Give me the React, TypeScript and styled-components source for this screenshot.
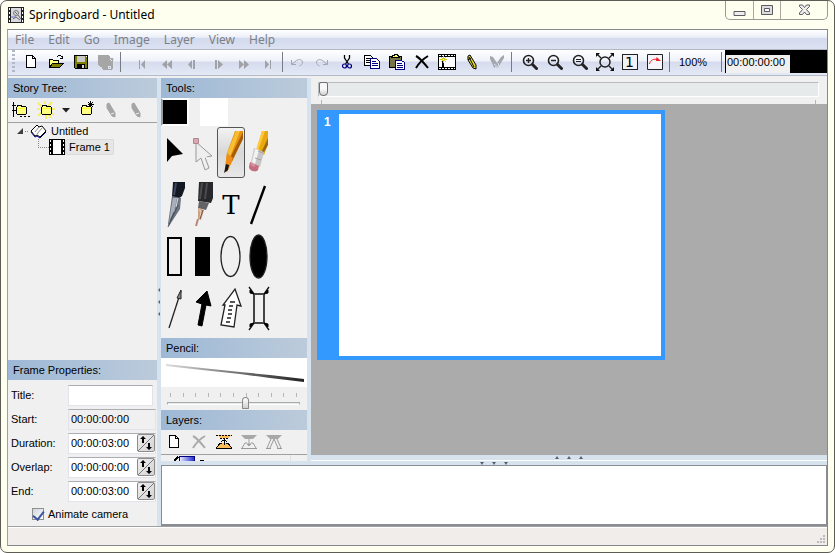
import React from "react";
import styled, { createGlobalStyle, css } from "styled-components";

const GlobalStyle = createGlobalStyle`
  * { box-sizing: border-box; }
  body { margin: 0; font: 11px/14px "Liberation Sans", Arial, sans-serif; color: #000; background: #fff; }
  button, input { font: inherit; color: inherit; margin: 0; }
  svg { display: block; flex: none; }
`;

/* ---------- window frame ---------- */

const Window = styled.div`
  height: 100vh;
  display: flex;
  flex-direction: column;
  padding: 0 6px 6px;
  background: #fffff0;
  border: 1px solid #5c5c54;
  border-radius: 7px;
  overflow: hidden;
`;

const TitleBar = styled.header`
  flex: none;
  height: 28px;
  display: flex;
  align-items: center;
  gap: 5px;
  padding-left: 1px;
`;

const Title = styled.h1`
  flex: 1;
  margin: 0;
  font: 400 12px/20px "Noto Sans", "Open Sans", sans-serif;
`;

const Caption = styled.div`
  align-self: flex-start;
  display: flex;
  border: 1px solid #9a9a92;
  border-top: 0;
  border-radius: 0 0 5px 5px;
`;

const CaptionButton = styled.button<{ $wide?: boolean }>`
  display: grid;
  place-items: center;
  width: ${(p) => (p.$wide ? 47 : 27)}px;
  height: 18px;
  padding: 0;
  border: 0;
  background: none;
  & + & { border-left: 1px solid #a8a8a0; }
`;

const Client = styled.div`
  flex: 1;
  min-height: 0;
  display: flex;
  flex-direction: column;
  border: 1px solid #85888c;
  border-left-color: #a0a0a0;
  background: #f0f0f0;
`;

const MenuBar = styled.nav`
  flex: none;
  display: flex;
  height: 19px;
  background: linear-gradient(#fff 0, #eceff8 38%, #d3daed 45%, #dce2f2 100%);
`;

const MenuItem = styled.button`
  border: 0;
  padding: 0 7px;
  background: none;
  font: 12px/18px "Noto Sans", "Open Sans", sans-serif;
  color: #7c8087;
`;

/* ---------- main tool bar ---------- */

const Toolbar = styled.div`
  flex: none;
  display: flex;
  align-items: center;
  height: 27px;
  padding-bottom: 2px;
  border-top: 1px solid #b4b8c2;
  border-bottom: 1px solid #b4bac8;
  background: linear-gradient(#fff 0, #f0f2fa 42%, #d6dcee 50%, #e4e9f6 100%);
`;

const Grip = styled.span`
  width: 3px;
  height: 23px;
  margin: 0 3px 0 4px;
  background: repeating-linear-gradient(#b3b8c8 0 2px, transparent 2px 4px);
`;

const ToolGroup = styled.div`
  flex: none;
  display: flex;
`;

const Separator = styled.span<{ $after: number }>`
  flex: none;
  width: 1px;
  height: 20px;
  margin: 0 ${(p) => p.$after}px 0 2px;
  background: #767b86;
`;

const IconButton = styled.button<{ $narrow?: boolean }>`
  display: grid;
  place-items: center;
  width: ${(p) => (p.$narrow ? 15 : 25)}px;
  height: 24px;
  padding: 0;
  border: 0;
  background: none;
`;

const ZoomValue = styled.output`
  width: 47px;
  padding-left: 7px;
`;

const ClockWell = styled.div`
  flex: 1;
  align-self: stretch;
  padding: 5px 0 0 1px;
  background: #000;
`;

const ClockField = styled.input`
  display: block;
  width: 64px;
  height: 18px;
  padding: 0 0 4px 1px;
  border: 0;
  background: #f0f0f0;
`;

/* ---------- panels ---------- */

const Workspace = styled.div`
  flex: 1;
  min-height: 0;
  display: grid;
  grid-template-columns: 149px 4px minmax(0, 1fr);
  padding-top: 2px;
`;

const Column = styled.section`
  display: flex;
  flex-direction: column;
  min-height: 0;
  min-width: 0;
`;

const Heading = styled.h2`
  flex: none;
  height: 20px;
  margin: 0;
  padding: 0 5px;
  font: 11px/21px "Liberation Sans", Arial, sans-serif;
  background: linear-gradient(90deg, #9db8d6, #bccbdb);
`;

const PanelBar = styled.div`
  flex: none;
  display: flex;
  height: 25px;
  border-bottom: 1px solid #a0a0a0;
`;

const Splitter = styled.div`
  display: flex;
  align-items: center;
  justify-content: center;
  background: #d6e2ee;
`;

const Tree = styled.ul`
  flex: 1;
  margin: 0;
  padding: 0 0 0 1px;
  list-style: none;
`;

const TreeRow = styled.li<{ $nested?: boolean }>`
  display: flex;
  align-items: center;
  height: 16px;
  padding-left: ${(p) => (p.$nested ? 28 : 0)}px;
`;

const TreeLabel = styled.span<{ $selected?: boolean }>`
  padding: 0 4px;
  line-height: 16px;
  ${(p) =>
    p.$selected &&
    css`
      border-radius: 2px;
      background: #e6e6e6;
      box-shadow: inset 0 0 0 1px #dadada;
    `}
`;

const Form = styled.form`
  flex: none;
  height: 146px;
  padding: 3px 0 0 3px;
`;

const Field = styled.label`
  display: grid;
  grid-template-columns: 57px minmax(0, 1fr);
  align-items: center;
  height: 24px;
`;

const Entry = styled.span<{ $static?: boolean; $short?: boolean }>`
  display: flex;
  align-items: center;
  height: 21px;
  margin-right: ${(p) => (p.$short ? 4 : 1)}px;
  border: 1px solid #e2e3ea;
  border-top-color: #abadb3;
  background: ${(p) => (p.$static ? "#f0f0f0" : "#fff")};
`;

const EntryInput = styled.input`
  flex: 1;
  width: 0;
  min-width: 0;
  padding: 0 2px;
  border: 0;
  background: none;
`;

const SpinButton = styled.button`
  flex: none;
  display: grid;
  place-items: center;
  width: 18px;
  height: 18px;
  padding: 0;
  border: 1px solid #8c8c8c;
  border-radius: 2px;
  background: linear-gradient(135deg, #eee, #d4d4d4);
`;

const CheckLabel = styled.label`
  display: flex;
  align-items: center;
  gap: 4px;
  height: 22px;
  padding-left: 21px;
`;

const Checkbox = styled.input`
  appearance: none;
  display: flex;
  justify-content: center;
  width: 12px;
  height: 12px;
  border: 1px solid #8e8f8f;
  background: linear-gradient(135deg, #cfd6df, #fff);
  &:checked::after {
    content: "";
    width: 5px;
    height: 9px;
    border: solid #3e56a0;
    border-width: 0 2px 2px 0;
    transform: rotate(38deg);
  }
`;

/* ---------- drawing area ---------- */

const RightSide = styled.div`
  display: flex;
  flex-direction: column;
  min-width: 0;
  min-height: 0;
`;

const Upper = styled.div`
  flex: 1;
  min-height: 0;
  display: grid;
  grid-template-columns: 146px 4px minmax(0, 1fr);
`;

const Swatches = styled.div`
  flex: none;
  display: flex;
  gap: 11px;
  height: 29px;
`;

const Swatch = styled.button<{ $color: string; $current?: boolean }>`
  width: 28px;
  height: 28px;
  border: 0;
  border-style: solid;
  border-width: ${(p) => (p.$current ? "2px" : "0")};
  border-color: #fff #fff #fff #9a9a9a;
  background: ${(p) => p.$color};
`;

const ToolGrid = styled.div`
  flex: 1;
  display: grid;
  grid-template-columns: repeat(4, 28px);
  grid-auto-rows: 52px;
`;

const ToolButton = styled.button<{ $active?: boolean }>`
  display: grid;
  place-items: center;
  width: 28px;
  height: 51px;
  padding: 0;
  border: 1px solid transparent;
  background: none;
  ${(p) =>
    p.$active &&
    css`
      border-color: #555;
      border-radius: 3px;
      background: linear-gradient(#f2f2f2, #d8d8d8 50%, #e8e8e8);
    `}
`;

const StrokePreview = styled.div`
  flex: none;
  height: 29px;
  background: #fff;
`;

const SizeControl = styled.div`
  flex: none;
  height: 23px;
  padding: 6px 7px 0 6px;
`;

const Ticks = styled.div`
  display: flex;
  justify-content: space-between;
  height: 4px;
  padding: 0 3px;
`;

const Tick = styled.span`
  width: 1px;
  height: 4px;
  background: #b4b8b8;
`;

const SizeRange = styled.input`
  appearance: none;
  display: block;
  width: 100%;
  height: 13px;
  background: none;
  &::-webkit-slider-runnable-track {
    height: 3px;
    border: 1px solid #a8acac;
    border-bottom-color: #fff;
    background: #e7eaea;
  }
  &::-webkit-slider-thumb {
    appearance: none;
    width: 7px;
    height: 12px;
    margin-top: -6px;
    border: 1px solid #8a8a8a;
    border-radius: 4px 4px 1px 1px;
    background: linear-gradient(#fff, #d0d0d0);
  }
`;

const LayerList = styled.div`
  flex: none;
  height: 6px;
  overflow: hidden;
  margin-right: 16px;
  border-right: 1px solid #e0e0e0;
  padding-left: 12px;
`;

const Timeline = styled.div`
  flex: none;
  height: 26px;
  padding: 3px 8px 0 7px;
`;

const TimeRange = styled.input`
  appearance: none;
  display: block;
  width: 100%;
  height: 16px;
  background: none;
  &::-webkit-slider-runnable-track {
    height: 15px;
    border: 1px solid #b9bcbc;
    border-right-color: #fff;
    border-bottom-color: #fff;
    background: #e7eaea;
  }
  &::-webkit-slider-thumb {
    appearance: none;
    width: 9px;
    height: 14px;
    margin-top: -1px;
    border: 1px solid #707070;
    border-radius: 2px 2px 4px 4px;
    background: linear-gradient(#f8f8f8 50%, #d2d2d2);
  }
`;

const TimeTicks = styled(Ticks)`
  margin-top: 3px;
`;

const Canvas = styled.main`
  flex: 1;
  min-height: 0;
  padding: 6px;
  background: #ababab;
  overflow: hidden;
`;

const Frame = styled.article`
  display: flex;
  width: 348px;
  height: 250px;
  padding: 4px;
  background: #3399ff;
`;

const FrameNumber = styled.span`
  width: 18px;
  padding-left: 3px;
  color: #fff;
  font: 700 12px/16px "Liberation Sans", Arial, sans-serif;
`;

const Paper = styled.div`
  flex: 1;
  background: #fff;
`;

const CanvasSplit = styled(Splitter)`
  flex: none;
  height: 6px;
  border-bottom: 1px solid #fff;
`;

const NotesSplit = styled(Splitter)`
  flex: none;
  height: 4px;
`;

const Notes = styled.textarea`
  flex: none;
  display: block;
  width: 100%;
  height: 61px;
  border: 1px solid #8a8e92;
  border-bottom-width: 2px;
  background: #fff;
  resize: none;
`;

const StatusBar = styled.footer`
  flex: none;
  display: flex;
  align-items: flex-end;
  justify-content: flex-end;
  height: 19px;
  padding: 0 2px 2px 0;
  border-top: 1px solid #a0a0a0;
  background: #f0edeb;
  box-shadow: inset 0 1px 0 #fff;
`;

/* ---------- drawings ---------- */

type ArtProps = { w?: number; h?: number; crisp?: boolean; children: React.ReactNode };
const Art = ({ w = 16, h = 16, crisp, children }: ArtProps) => (
  <svg width={w} height={h} viewBox={`0 0 ${w} ${h}`} fill="none" shapeRendering={crisp ? "crispEdges" : undefined} aria-hidden="true">
    {children}
  </svg>
);

const AppIcon = () => (
  <Art crisp>
    <path d="M0 0h16v16H0z" fill="#222" />
    <path d="M3 1h10v14H3z" fill="#d9dade" />
    <path d="M1 1h1v2H1zM1 5h1v2H1zM1 9h1v2H1zM1 13h1v2H1zM14 1h1v2h-1zM14 5h1v2h-1zM14 9h1v2h-1zM14 13h1v2h-1z" fill="#fff" />
    <g shapeRendering="auto">
      <circle cx="8" cy="6" r="2.500" stroke="#777" />
      <path d="M5 12l3-2 4 3M7 5l2 2M10 8l3 4" stroke="#666" />
      <path d="M3 10h5" stroke="#6d70d0" />
    </g>
  </Art>
);

const NewIcon = () => (
  <Art crisp><path d="M3.500 1.500h6l3 3v9h-9z" fill="#fff" stroke="#000" /><path d="M9.500 1.500v3h3" stroke="#000" /></Art>
);
const OpenIcon = () => (
  <Art crisp>
    <path d="M1.500 13.500v-8h3l1 1h5v3" fill="#ffff80" stroke="#000" />
    <path d="M1.500 13.500l3-4h11l-4 4z" fill="#808000" stroke="#000" />
    <path d="M9 2.500h1M10 1.500h3M13 2.500h1M14 3.500h1M12 4.500h3M14.500 2v3" stroke="#000" />
  </Art>
);
const SaveIcon = () => (
  <Art crisp>
    <path d="M1.500 1.500h13v13h-12l-1-1z" fill="#808000" stroke="#000" />
    <path d="M4 2h8v6H4z" fill="#c8c8c8" /><path d="M4 10h8v5H4z" fill="#000" /><path d="M9 11h2v3H9z" fill="#d8d8d8" /><path d="M13 2h1v1h-1z" fill="#fff" />
  </Art>
);
const SaveAllIcon = () => (
  <Art w={18} crisp>
    <path d="M1 1h10l2 1v2h3v11l-2 1H6l-1-3H3l-1-2H1z" fill="#a6a6a6" />
    <path d="M16.500 4v10M11.500 12.500h2v2h-2z" stroke="#dfe3ef" /><path d="M13 5h1v1h1v1h-1z" fill="#eee" />
  </Art>
);

const transportPaths: Record<string, string> = {
  first: "M4 5h1v9H4zM10 5v9L6 9.500z",
  rewind: "M7 5v9L2 9.500zM12 5v9L7 9.500z",
  back: "M3 9.500L7 5v9zM8 5h2v9H8z",
  forward: "M5 5h2v9H5zM8 5l5 4.500L8 14z",
  fast: "M4 5l5 4.500L4 14zM9 5l5 4.500L9 14z",
  last: "M5 5l4 4.500L5 14zM10 5h1v9h-1z",
};
const TransportIcon = ({ kind }: { kind: string }) => (
  <Art h={16}><path d={transportPaths[kind]} fill="#a0a2a8" transform="translate(0 1)" /></Art>
);

const UndoIcon = () => <Art><path d="M2.500 6v4.500h4.500M3 10l4-3c2-2 6-2 6.500 1 0 2-1 3-3 4" stroke="#a4a7ae" /></Art>;
const RedoIcon = () => <Art><path d="M13.500 6v4.500H9M13 10L9 7C7 5 3 5 2.500 8c0 2 1 3 3 4" stroke="#a4a7ae" /></Art>;
const CutIcon = () => (
  <Art>
    <path d="M5.500 1v3l4 6M10.500 1v3l-4 6" stroke="#000" strokeWidth="1.300" />
    <circle cx="5.500" cy="12" r="2" stroke="#000080" strokeWidth="1.200" /><circle cx="10.500" cy="12" r="2" stroke="#000080" strokeWidth="1.200" />
  </Art>
);
const CopyIcon = () => (
  <Art crisp>
    <path d="M.5 1.500h6l2 2v8h-8z" fill="#fff" stroke="#000" /><path d="M2 4.500h4M2 6.500h5M2 8.500h5" stroke="#000" />
    <path d="M6.500 4.500h6l3 3v7h-9z" fill="#fff" stroke="#000080" /><path d="M8 7.500h4M8 9.500h6M8 11.500h6" stroke="#000080" />
  </Art>
);
const PasteIcon = () => (
  <Art crisp>
    <path d="M.5 2.500h12v11h-12z" fill="#77734a" stroke="#000" /><path d="M3 3.500h7l-1-2H8v-1H5v1H4z" fill="#ffff60" stroke="#000" />
    <path d="M6.500 6.500h6l3 2v7h-9z" fill="#fff" stroke="#000080" /><path d="M8 9.500h5M8 11.500h6M8 13.500h6" stroke="#000080" />
  </Art>
);
const DeleteIcon = ({ color = "#000" }: { color?: string }) => (
  <Art><path d="M2 2c4 2 8 7 12 12M14 2C9 5 5 9 2 14" stroke={color} strokeWidth="2" /></Art>
);
const FilmIcon = () => (
  <Art w={18} crisp>
    <path d="M0 0h18v16H0z" fill="#000" /><path d="M1 3h16v10H1z" fill="#fff" />
    <path d="M1 1.500h16M1 14.500h16" stroke="#fff" strokeDasharray="2 1" />
    <path d="M4 6h2v7H4z" fill="#000" /><path d="M5.500 2v7M2 5.500h7M3 3l5 5M8 3L3 8" stroke="#d8ce20" /><path d="M5 5h1v1H5z" fill="#fff" />
  </Art>
);
const CrayonIcon = ({ dim }: { dim?: boolean }) => (
  <Art>
    <path d="M4 2l2-1 6 10v4l-3-1-5-8z" fill={dim ? "#a5a5a5" : "#e4dc30"} stroke={dim ? "#a5a5a5" : "#000"} />
    {!dim && <path d="M5 3l5 10M4 6l3-2" stroke="#000" />}
    {dim && <path d="M8 12l3-1" stroke="#eee" />}
  </Art>
);
const CrayonsIcon = () => (
  <Art><path d="M1 2l3 1 4 6 4-6 3-2v3l-5 8-2 2-1-2-2 2-1-3-3-6z" fill="#a5a7ae" /><path d="M5 10l4 3M9 9l1 3" stroke="#dce1ef" /></Art>
);
const ZoomIcon = ({ kind }: { kind: "in" | "out" | "fit" }) => (
  <Art>
    <circle cx="6.500" cy="6.500" r="5" stroke="#222" strokeWidth="1.600" />
    <path d="M10.500 10.500l4 4" stroke="#222" strokeWidth="3" strokeLinecap="round" />
    {kind === "fit" ? <path d="M4 5.500h5M4 7.500h5" stroke="#222" /> : <path d={kind === "in" ? "M4 6.500h5M6.500 4v5" : "M4 6.500h5"} stroke="#222" strokeWidth="1.400" />}
  </Art>
);
const FitIcon = () => (
  <Art w={18} h={18}>
    <circle cx="9" cy="9" r="5" stroke="#222" strokeWidth="1.500" />
    <path d="M1 1l4 4M17 1l-4 4M1 17l4-4M17 17l-4-4" stroke="#222" strokeWidth="1.400" />
    <path d="M0 0h4L0 4zM18 0h-4l4 4zM0 18h4l-4-4zM18 18h-4l4-4z" fill="#111" />
  </Art>
);
const OneBox = styled.span`
  width: 16px;
  height: 16px;
  border: 1px solid #222;
  background: #f0f2fa;
  font: 14px/14px "DejaVu Sans", sans-serif;
  color: #000;
`;
const CurveIcon = () => (
  <Art><path d="M.5.5h15v15H.5z" fill="#f5f5fb" stroke="#222" /><path d="M2.500 10c1-4 4-6 9-4" stroke="#f02020" /><path d="M9.500 3l4.500 4h-5z" fill="#f02020" /></Art>
);

const FolderIcon = ({ kind }: { kind: "tree" | "sun" | "star" }) => (
  <Art w={18} h={18} crisp>
    {kind === "sun" && <path d="M1 2l4 4M15 1l-4 4M17 14l-3-2M1 15l3-3M8 0v3M0 8h3M15 8h3M9 18v-4M14 17l-2-3" stroke="#f8ee6a" strokeWidth="2" />}
    {kind === "tree" && <path d="M1.500 1v15M0 4.500h4M0 9.500h4M8 15.500h2M12 15.500h2M16 15.500h2" stroke="#000" />}
    <path d="M4 6h1v-2h5v1h4v1h1v7h-1v1H5v-1H4z" fill="#000" />
    <path d="M6 5h3v1h5v7H5V6h1z" fill="#ffff80" />
    <path d="M5 7.500h9" stroke="#ffff30" />
    {kind === "star" && <path d="M13.500 0v6M11 3.500h6M11 1l5 5M16 1l-5 5" stroke="#000" />}
  </Art>
);
const DropArrow = () => <Art w={8} h={5}><path d="M0 0h8L4 4.500z" fill="#222" /></Art>;
const ExpandedIcon = () => <Art w={20} h={14}><path d="M14 4v6H8z" fill="#404040" /><path d="M16 7.500h4" stroke="#888" strokeDasharray="1 1" /></Art>;
const BookIcon = () => (
  <Art w={18} h={15}>
    <path d="M2 7l6-6 2 2 3-1 4 5-6 6-3-2-2 1z" fill="#fff" stroke="#000" /><path d="M2 8l4 5 2-1 3 2 6-6" stroke="#000080" /><path d="M10 3L6 8M13 4l-5 6" stroke="#888" />
  </Art>
);
const FrameIcon = () => (
  <Art crisp><path d="M0 0h16v16H0z" fill="#000" /><path d="M4 1h8v14H4z" fill="#fff" /><path d="M1.500 1v14M14.500 1v14" stroke="#fff" strokeDasharray="2 2" /></Art>
);
const BranchLine = () => <Art w={12} h={16} crisp><path d="M1.500 0v8M1 8.500h11" stroke="#888" strokeDasharray="1 1" /></Art>;
const SpinIcon = () => (
  <Art><path d="M0 16L16 0" stroke="#777" /><path d="M5 1l3 3H6v4H4V4H2zM11 15l-3-3h2V8h2v4h2z" fill="#000" /></Art>
);

const ArrowTool = () => <Art w={26} h={48}><path d="M5 9v24l5-6 11-2z" fill="#000" /></Art>;
const NodeTool = () => (
  <Art w={26} h={48}>
    <path d="M6 13v20l5-4 4 12 4-2-4-11 7-1z" fill="#eee" stroke="#999" /><path d="M11 28l6-1" stroke="#eee" strokeWidth="3" /><path d="M3.500 9.500h5v5h-5z" fill="#dba7b1" stroke="#b08890" />
  </Art>
);
const PencilTool = () => (
  <Art w={26} h={48}>
    <path d="M17 2h8v7L14 33 9 43l-2-1 2-18z" fill="#e8930c" /><path d="M18 2h4L12 28l-3-3z" fill="#f8bf35" /><path d="M25 3v7l-11 22-2-3z" fill="#a85b06" />
    <path d="M9 24l6 5-5 10-3-1z" fill="#f08c18" /><path d="M8 35l3 1-1 5-4 3z" fill="#151515" />
  </Art>
);
const EraserTool = () => (
  <Art w={26} h={48}>
    <path d="M16 2h6v13l-4 11-8-4z" fill="#e8a70d" /><path d="M16 2h3l-7 20-2-1z" fill="#ffc83d" /><path d="M22 9v7l-5 9-2-1z" fill="#9b6714" />
    <path d="M8 19l10 4-4 15-9-5z" fill="#c6c6c6" /><path d="M9 20l4 1-4 14-3-2z" fill="#f2f2f2" /><path d="M12 22l5 2M9 29l6 2" stroke="#a3a3a3" />
    <path d="M4 33l9 4-1 4c-2 3-9 1-9-3z" fill="#c46e7f" /><path d="M5 35l4 2" stroke="#dc929f" strokeWidth="2" />
  </Art>
);
const NibTool = () => (
  <Art w={26} h={48}>
    <path d="M11 1h12v6l-3 8-4 3-6-2z" fill="#141822" /><path d="M14 2l-2 12" stroke="#3b4760" strokeWidth="2" />
    <path d="M10 15l9 2-1 11L7 45l-1-2 2-14z" fill="#6c7380" /><path d="M11 17h4l-3 15-5 10 2-14z" fill="#a9b0ba" /><path d="M16 24L6 46M12 31l-4 9" stroke="#4a515e" /><path d="M16 17l-2 9" stroke="#d6dade" />
  </Art>
);
const TechPenTool = () => (
  <Art w={26} h={48}>
    <path d="M9 1h14v16l-2 5-13-2z" fill="#29292b" /><path d="M12 2l-2 16M17 2l-2 16" stroke="#4b4b50" strokeWidth="2" /><path d="M9 20l10 2-3 7-8-2z" fill="#636367" />
    <path d="M8 27l6 2-3 10-3-1z" fill="#caa184" /><path d="M9 29l2 1-1 8" stroke="#f0d4bb" /><path d="M13 29l-3 9" stroke="#74543e" /><path d="M8 38l-2 7" stroke="#b58878" strokeWidth="2" />
  </Art>
);
const LetterTool = styled.span`
  font: 26px/30px "DejaVu Serif", "Liberation Serif", serif;
`;
const LineTool = () => <Art w={26} h={48}><path d="M5 43L19 5" stroke="#000" strokeWidth="2.400" /></Art>;
const RectTool = ({ solid }: { solid?: boolean }) => <Art w={26} h={48}><path d="M6 5h13v37H6z" stroke="#000" strokeWidth="2" fill={solid ? "#000" : "none"} /></Art>;
const OvalTool = ({ solid }: { solid?: boolean }) => <Art w={26} h={48}><ellipse cx="12.500" cy="23.500" rx={solid ? 8.500 : 9.500} ry={solid ? 21.500 : 20} stroke="#222" strokeWidth="1.300" fill={solid ? "#000" : "none"} /></Art>;
const ThinArrow = () => <Art w={26} h={48}><path d="M7 43L19 6" stroke="#222" strokeWidth="1.300" /><path d="M19 5v9l-4-1z" fill="#888" stroke="#222" /></Art>;
const BoldArrow = () => <Art w={26} h={48}><path d="M17 6l4 15-5-1-4 21-4-1 4-21-6-2z" fill="#000" stroke="#000" /></Art>;
const HatchedArrow = () => (
  <Art w={26} h={48}><path d="M17 4l6 17-4-1-3 22-13-2 4-20H5z" fill="#fff" stroke="#222" strokeWidth="1.300" /><path d="M12 17h5M11 21h4M10 25h4M10 29h4M9 33h4M8 37h4" stroke="#222" strokeWidth="1.300" /></Art>
);
const FrameArrows = () => (
  <Art w={26} h={48}><path d="M8 9h10v29H8z" stroke="#444" strokeWidth="2" /><path d="M3 2l5 7M23 2l-5 7M3 45l5-7M23 45l-5-7" stroke="#111" strokeWidth="1.300" /><path d="M4 5l4 4-4-1zM22 5l-4 4 4-1zM4 42l4-4-4 1zM22 42l-4-4 4 1z" fill="#000" stroke="#000" /></Art>
);

const StrokeArt = () => (
  <svg width="100%" height="29" viewBox="0 0 146 29" aria-hidden="true">
    <defs><linearGradient id="strokeFade"><stop offset="0" stopColor="#ddd" /><stop offset=".4" stopColor="#888" /><stop offset="1" stopColor="#222" /></linearGradient></defs>
    <path d="M5 6l36 4 38 4 30 3 34 4v3l-34-4-30-4-38-4-36-4z" fill="url(#strokeFade)" />
  </svg>
);
const LayerAdjust = ({ kind }: { kind: "up" | "down" | "both" }) => {
  if (kind === "up")
    return (
      <Art w={18} crisp>
        <path d="M2 1h14l-3 3H5z" fill="#ffbd5c" /><path d="M1 1.500h16" stroke="#000" strokeDasharray="2 1" /><path d="M5 4.500h8" stroke="#000" strokeDasharray="2 1" />
        <path d="M5 9h8l4 6H1z" fill="#ffbd5c" /><path d="M1 14.500h16M1.500 14L5 9h2M16.500 14L13 9h-2" stroke="#000" />
        <path d="M9 11V5M6 7.500h1M7 6.500h4M11 7.500h1" stroke="#000" />
      </Art>
    );
  return (
    <Art w={18}>
      <path d="M1 1h16l-4 4H5z" fill="#a8a8a8" />
      {kind === "down" ? (
        <>
          <path d="M1 14.500h16M2 14l3-5h2M16 14l-3-5h-2" stroke="#999" />
          <path d="M9 5v6M7 10l2 2 2-2z" fill="#a0a0a0" stroke="#a0a0a0" />
        </>
      ) : (
        <path d="M6 5L2 14M12 5l4 9M9 5l-4 9M9 5l4 9M1 14.500h5M12 14.500h5" stroke="#999" />
      )}
    </Art>
  );
};
const LayerRow = () => (
  <Art w={46} h={16} crisp>
    <defs><linearGradient id="layerBlue"><stop stopColor="#eef" /><stop offset="1" stopColor="#2028d0" /></linearGradient></defs>
    <path d="M1 6l4-4" stroke="#000" strokeWidth="2" />
    <path d="M6.500 1.500h15v14h-15z" fill="url(#layerBlue)" stroke="#000080" />
    <path d="M27 5.500h4" stroke="#000" />
  </Art>
);
const GripArrows = ({ dir }: { dir: "left" | "up" | "down" }) =>
  dir === "left" ? (
    <Art w={4} h={28}><path d="M3 0v4L1 2zM3 12v4l-2-2zM3 24v4l-2-2z" fill="#566473" /></Art>
  ) : (
    <Art w={28} h={3}><path d={dir === "up" ? "M0 3h4L2 0zM12 3h4l-2-3zM24 3h4l-2-3z" : "M0 0h4L2 3zM12 0h4l-2 3zM24 0h4l-2 3z"} fill="#566473" /></Art>
  );
const SizeGrip = () => <Art w={9} h={9} crisp><path d="M7 1h2v2H7zM4 4h2v2H4zM7 4h2v2H7zM1 7h2v2H1zM4 7h2v2H4zM7 7h2v2H7z" fill="#bbb" /></Art>;

/* ---------- content ---------- */

type Command = [string, React.ReactNode];
const menus = ["File", "Edit", "Go", "Image", "Layer", "View", "Help"];
const fileCommands: Command[] = [["New", <NewIcon />], ["Open", <OpenIcon />], ["Save", <SaveIcon />], ["Save all", <SaveAllIcon />]];
const transport: Command[] = Object.keys(transportPaths).map((k) => [k, <TransportIcon kind={k} />]);
const editCommands: Command[] = [
  ["Undo", <UndoIcon />], ["Redo", <RedoIcon />], ["Cut", <CutIcon />], ["Copy", <CopyIcon />], ["Paste", <PasteIcon />],
  ["Delete", <DeleteIcon />], ["New frame", <FilmIcon />], ["Draw", <CrayonIcon />], ["Draw all", <CrayonsIcon />],
];
const viewCommands: Command[] = [
  ["Zoom in", <ZoomIcon kind="in" />], ["Zoom out", <ZoomIcon kind="out" />], ["Zoom level", <ZoomIcon kind="fit" />],
  ["Fit", <FitIcon />], ["Actual size", <OneBox>1</OneBox>], ["Rotate", <CurveIcon />],
];
const tools: Command[] = [
  ["Select", <ArrowTool />], ["Edit nodes", <NodeTool />], ["Pencil", <PencilTool />], ["Eraser", <EraserTool />],
  ["Ink pen", <NibTool />], ["Technical pen", <TechPenTool />], ["Text", <LetterTool>T</LetterTool>], ["Line", <LineTool />],
  ["Rectangle", <RectTool />], ["Filled rectangle", <RectTool solid />], ["Ellipse", <OvalTool />], ["Filled ellipse", <OvalTool solid />],
  ["Arrow", <ThinArrow />], ["Bold arrow", <BoldArrow />], ["Motion arrow", <HatchedArrow />], ["Camera move", <FrameArrows />],
];
const layerCommands: Command[] = [
  ["New layer", <NewIcon />], ["Delete layer", <DeleteIcon color="#aaa" />], ["Raise layer", <LayerAdjust kind="up" />],
  ["Lower layer", <LayerAdjust kind="down" />], ["Merge layers", <LayerAdjust kind="both" />],
];
const timings: [string, string, boolean][] = [
  ["Start:", "00:00:00:00", false], ["Duration:", "00:00:03:00", true], ["Overlap:", "00:00:00:00", true], ["End:", "00:00:03:00", true],
];

const Commands = ({ items }: { items: Command[] }) => (
  <ToolGroup>
    {items.map(([name, icon]) => <IconButton key={name} type="button" aria-label={name}>{icon}</IconButton>)}
  </ToolGroup>
);

const StoryColumn = () => (
  <Column>
    <Heading>Story Tree:</Heading>
    <PanelBar>
      <IconButton aria-label="New scene"><FolderIcon kind="tree" /></IconButton>
      <IconButton aria-label="New sequence"><FolderIcon kind="sun" /></IconButton>
      <IconButton $narrow aria-label="More"><DropArrow /></IconButton>
      <IconButton aria-label="Add folder"><FolderIcon kind="star" /></IconButton>
      <IconButton aria-label="Draw before"><CrayonIcon dim /></IconButton>
      <IconButton aria-label="Draw after"><CrayonIcon dim /></IconButton>
    </PanelBar>
    <Tree>
      <TreeRow><ExpandedIcon /><BookIcon /><TreeLabel>Untitled</TreeLabel></TreeRow>
      <TreeRow $nested><BranchLine /><FrameIcon /><TreeLabel $selected>Frame 1</TreeLabel></TreeRow>
    </Tree>
    <Heading>Frame Properties:</Heading>
    <Form>
      <Field>Title:<Entry $short><EntryInput aria-label="Title" /></Entry></Field>
      {timings.map(([label, value, editable]) => (
        <Field key={label}>
          {label}
          <Entry $static={!editable}>
            <EntryInput defaultValue={value} readOnly={!editable} aria-label={label} />
            {editable && <SpinButton type="button" aria-label={`Adjust ${label}`}><SpinIcon /></SpinButton>}
          </Entry>
        </Field>
      ))}
      <CheckLabel><Checkbox type="checkbox" defaultChecked />Animate camera</CheckLabel>
    </Form>
  </Column>
);

const ToolsColumn = () => (
  <Column>
    <Heading>Tools:</Heading>
    <Swatches>
      <Swatch $color="#000" $current aria-label="Foreground colour" />
      <Swatch $color="#fff" aria-label="Background colour" />
    </Swatches>
    <ToolGrid>
      {tools.map(([name, art]) => <ToolButton key={name} $active={name === "Pencil"} aria-label={name}>{art}</ToolButton>)}
    </ToolGrid>
    <Heading>Pencil:</Heading>
    <StrokePreview><StrokeArt /></StrokePreview>
    <SizeControl>
      <Ticks>{Array.from({ length: 11 }, (_, i) => <Tick key={i} />)}</Ticks>
      <SizeRange type="range" min={0} max={10} defaultValue={6} aria-label="Pencil size" />
    </SizeControl>
    <Heading>Layers:</Heading>
    <PanelBar><Commands items={layerCommands} /></PanelBar>
    <LayerList><LayerRow /></LayerList>
  </Column>
);

export default function App() {
  return (
    <Window>
      <GlobalStyle />
      <TitleBar>
        <AppIcon />
        <Title>Springboard - Untitled</Title>
        <Caption>
          <CaptionButton aria-label="Minimize"><Art w={13} h={12}><path d="M1 7.500h11v4H1z" fill="#eee" stroke="#5b5b62" /></Art></CaptionButton>
          <CaptionButton aria-label="Maximize"><Art w={12} h={11}><path d="M.5.5h11v9H.5z" fill="#ddd" stroke="#5b5b62" /><path d="M3.500 3.500h5v3h-5z" fill="#fff" stroke="#5b5b62" /></Art></CaptionButton>
          <CaptionButton $wide aria-label="Close"><Art w={13} h={12}><path d="M1.500 1h3l2 2.500L8.500 1h3v1.500L8.500 5.500l3 3.500v1.500h-3l-2-2.500-2 2.500h-3V9l3-3.500-3-3z" fill="#eee" stroke="#5b5b62" /></Art></CaptionButton>
        </Caption>
      </TitleBar>
      <Client>
        <MenuBar>{menus.map((m) => <MenuItem key={m}>{m}</MenuItem>)}</MenuBar>
        <Toolbar>
          <Grip />
          <Commands items={fileCommands} />
          <Separator $after={9} />
          <Commands items={transport} />
          <Separator $after={1} />
          <Commands items={editCommands} />
          <Separator $after={5} />
          <Commands items={viewCommands} />
          <Separator $after={2} />
          <ZoomValue>100%</ZoomValue>
          <Separator $after={3} />
          <ClockWell><ClockField aria-label="Current time" defaultValue="00:00:00:00" /></ClockWell>
        </Toolbar>
        <Workspace>
          <StoryColumn />
          <Splitter><GripArrows dir="left" /></Splitter>
          <RightSide>
            <Upper>
              <ToolsColumn />
              <Splitter />
              <Column>
                <Timeline>
                  <TimeRange type="range" min={0} max={100} defaultValue={0} aria-label="Timeline" />
                  <TimeTicks><Tick /><Tick /></TimeTicks>
                </Timeline>
                <Canvas><Frame><FrameNumber>1</FrameNumber><Paper /></Frame></Canvas>
                <CanvasSplit><GripArrows dir="up" /></CanvasSplit>
              </Column>
            </Upper>
            <NotesSplit><GripArrows dir="down" /></NotesSplit>
            <Notes aria-label="Notes" />
          </RightSide>
        </Workspace>
        <StatusBar><SizeGrip /></StatusBar>
      </Client>
    </Window>
  );
}
